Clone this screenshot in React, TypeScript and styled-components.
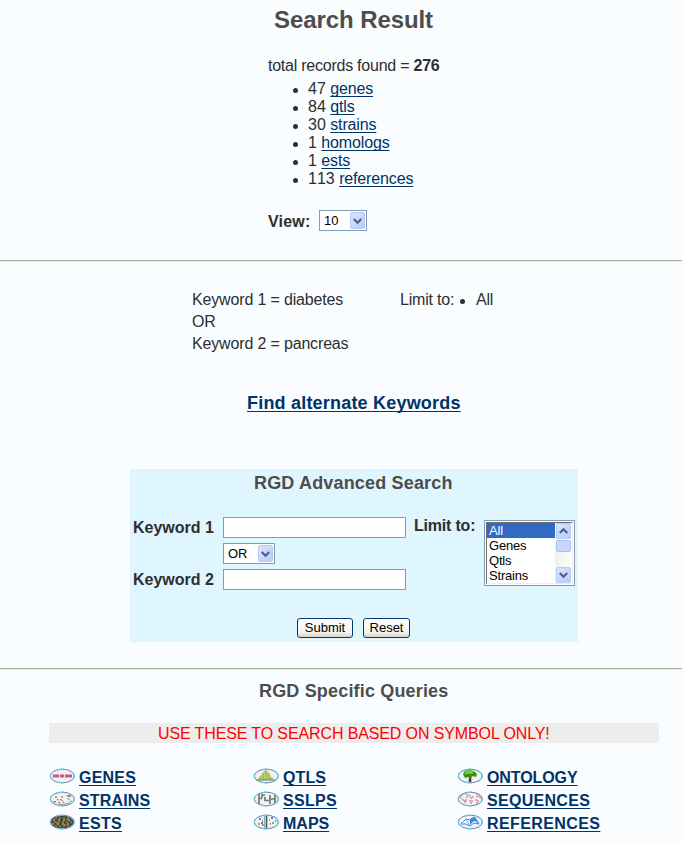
import React from "react";
import styled, { createGlobalStyle } from "styled-components";

const GlobalStyle = createGlobalStyle`
  body {
    margin: 0;
    background: #fafdff;
    color: #2e2e2e;
    font: 16px/18px "Liberation Sans", Arial, sans-serif;
  }
`;

const Page = styled.main`
  width: 682px;
  height: 842px;
  overflow: hidden;
`;

const Anchor = styled.a<{ $spacing?: number }>`
  color: #003366;
  text-decoration: underline;
  text-decoration-thickness: 1px;
  text-underline-offset: 2px;
  text-decoration-skip-ink: none;
  letter-spacing: ${(p) => p.$spacing ?? 0}px;
`;

const Results = styled.section`
  height: 254px;
  padding: 6px 0 0 268px;
  display: flex;
  flex-direction: column;
  align-items: flex-start;
`;

const PageTitle = styled.h1`
  margin: 0 0 23px 6px;
  font-size: 24px;
  line-height: 28px;
  letter-spacing: -0.08px;
  color: #4d4d4d;
`;

const Total = styled.p`
  margin: 0;
  height: 23px;
  white-space: pre;
  letter-spacing: -0.24px;
`;

const ResultList = styled.ul`
  margin: 0;
  padding: 0;
  list-style: none;
  font-kerning: none;
`;

const ResultItem = styled.li`
  display: flex;
  align-items: center;
  height: 18px;
  padding-left: 25px;
  white-space: pre;
`;

const Bullet = styled.span<{ $gap: number }>`
  width: 5px;
  height: 5px;
  margin: 3px ${(p) => p.$gap}px 0 0;
  border-radius: 50%;
  background: #2e2e2e;
`;

const ViewRow = styled.div`
  display: flex;
  align-items: center;
  margin-top: 22px;
  height: 21px;
`;

const Label = styled.label`
  font-weight: bold;
`;

const ViewLabel = styled(Label)`
  width: 51px;
  padding-top: 2px;
  letter-spacing: 0.2px;
`;

const LimitLabel = styled(Label)`
  letter-spacing: -0.2px;
`;

const Divider = styled.hr`
  margin: 0;
  height: 1px;
  border: 0;
  border-top: 1px solid #aca899;
  background: #f1eee0;
`;

const SelectBox = styled.div<{ $width: number }>`
  box-sizing: border-box;
  width: ${(p) => p.$width}px;
  height: 21px;
  padding: 1px 1px 1px 4px;
  border: 1px solid #7f9db9;
  background: #fff;
  display: flex;
  align-items: center;
  justify-content: space-between;
  color: #000;
  font-size: 13px;
  line-height: 17px;
`;

const ArrowButton = styled.span<{ $height: number }>`
  box-sizing: border-box;
  width: 15px;
  height: ${(p) => p.$height}px;
  border: 1px solid #b6caf7;
  border-radius: 2px;
  background: linear-gradient(135deg, #d9e5ff, #b7cbfa);
  display: flex;
  align-items: center;
  justify-content: center;
`;

const Chevron = ({ up = false }: { up?: boolean }) => (
  <svg width="9" height="6" viewBox="0 0 9 6">
    <path
      d={up ? "M.8 5 4.5 1.3 8.2 5" : "M.8 1 4.5 4.7 8.2 1"}
      fill="none"
      stroke="#4d6185"
      strokeWidth="2.2"
    />
  </svg>
);

const Select = ({ value, width }: { value: string; width: number }) => (
  <SelectBox $width={width}>
    {value}
    <ArrowButton $height={17}>
      <Chevron />
    </ArrowButton>
  </SelectBox>
);

const Criteria = styled.section`
  display: grid;
  grid-template-columns: 208px auto;
  height: 131px;
  padding: 27px 0 0 192px;
  box-sizing: border-box;
  line-height: 22px;
  align-items: start;
`;

const Terms = styled.div`
  white-space: pre-line;
  letter-spacing: -0.16px;
`;

const Limit = styled.div`
  display: flex;
  align-items: center;
  letter-spacing: -0.2px;
`;

const LimitText = styled.span`
  width: 60px;
`;

const Alternate = styled.div`
  height: 76px;
  padding-left: 247px;
  font-size: 18px;
  font-weight: bold;
  line-height: 20px;
`;

const Panel = styled.form`
  box-sizing: border-box;
  width: 448px;
  height: 173px;
  margin: 0 0 26px 130px;
  padding: 4px 3px 0;
  background: #dff6ff;
`;

const Heading = styled.h2<{ $left: number }>`
  margin: 0;
  padding-left: ${(p) => p.$left}px;
  font-size: 18px;
  line-height: 21px;
  letter-spacing: 0.17px;
  color: #4d4d4d;
`;

const Fields = styled.div`
  display: grid;
  grid-template-columns: 90px 191px 70px 91px;
  height: 100px;
  padding-top: 23px;
  box-sizing: border-box;
  align-items: start;
`;

const Stack = styled.div`
  display: flex;
  flex-direction: column;
  gap: 5px;
`;

const Keywords = styled.div`
  display: flex;
  flex-direction: column;
  gap: 34px;
  padding-top: 2px;
`;

const TextInput = styled.input`
  box-sizing: border-box;
  width: 183px;
  height: 21px;
  margin: 0;
  padding: 2px;
  border: 1px solid #7f9db9;
  background: #fff;
`;

const ListBox = styled.div`
  box-sizing: border-box;
  width: 91px;
  height: 66px;
  margin-top: 3px;
  border: 1px solid #7f9db9;
  padding: 1px;
  background: #fff;
  display: flex;
`;

const ListInner = styled.div`
  flex: 1;
  display: flex;
  border: 1px solid #716f64;
  border-right-color: #f1efe2;
  border-bottom-color: #f1efe2;
`;

const Options = styled.div`
  flex: 1;
`;

const Option = styled.div<{ $selected: boolean }>`
  height: 15px;
  padding-left: 2px;
  font-size: 13px;
  line-height: 15px;
  letter-spacing: -0.2px;
  color: ${(p) => (p.$selected ? "#fff" : "#000")};
  background: ${(p) => (p.$selected ? "#316ac5" : "transparent")};
`;

const Scrollbar = styled.div`
  width: 17px;
  display: flex;
  flex-direction: column;
  align-items: center;
  background: linear-gradient(90deg, #f0f0ec, #fefefb);
`;

const Thumb = styled.div`
  box-sizing: border-box;
  width: 15px;
  height: 12px;
  margin: 1px 0 auto;
  border: 1px solid #a9bff0;
  border-radius: 2px;
  background: #c6d6fc;
`;

const Buttons = styled.div`
  display: flex;
  gap: 10px;
  padding-left: 164px;
  padding-top: 24px;
`;

const Button = styled.button<{ $width: number }>`
  width: ${(p) => p.$width}px;
  height: 20px;
  padding: 0;
  border: 1px solid #003c74;
  border-radius: 3px;
  background: linear-gradient(#fff, #f3f2ed 75%, #d8d3c7);
  color: #000;
  font: 13px/18px "Liberation Sans", Arial, sans-serif;
`;

const Queries = styled.section`
  padding-top: 11px;
`;

const Notice = styled.p`
  margin: 21px 0 23px 49px;
  width: 610px;
  height: 20px;
  text-indent: 109px;
  line-height: 21px;
  background: #ededed;
  color: #f00;
  white-space: nowrap;
  letter-spacing: -0.12px;
`;

const QueryGrid = styled.nav`
  display: grid;
  grid-template-columns: repeat(3, 204px);
  grid-auto-rows: 23px;
  padding-left: 49px;
`;

const QueryItem = styled.div`
  display: flex;
  align-items: center;
  gap: 4px;
  font-weight: bold;
  white-space: nowrap;
`;

const Badge = styled.svg`
  width: 26px;
  height: 16px;
  margin-top: -3px;
`;

const art: Record<string, React.ReactNode> = {
  GENES: (
    <>
      <path d="M3 8H23" stroke="#f0b5cd" />
      <path d="M4 6.5h6v3H4zM11 6.5h4v3h-4zM16 6.5h7v3h-7z" fill="#dc4b91" />
    </>
  ),
  QTLS: (
    <>
      <path d="M4 12 8 7l2-3 3-2 3 3 2 4 3 3z" fill="#b9cd72" />
      <path d="M7 9v3M10 5v7M13 2v10M16 5v7M19 9v3" stroke="#8fa94b" strokeWidth=".7" />
      <path d="M3 12H23" stroke="#708252" />
    </>
  ),
  ONTOLOGY: (
    <>
      <path d="M12 8h2l.5 6h-3z" fill="#882a20" />
      <path d="M6 6 8 3l4-1 5 1 3 3-1 3-3-1-2 2-3-1-3 1z" fill="#339315" />
      <path d="M8 4 12 2.5l5 1L15 6l-4-.5L8 7z" fill="#7bd622" />
    </>
  ),
  STRAINS: (
    <>
      <path d="M7 13 6 6l3 1 3-1 2 1 5-2 4 3-1 3-5 2-6 1z" fill="#f2efed" />
      <path d="m9 13 4 .5 6-1 4-3M13 9l2 3M18 7l3 2" fill="none" stroke="#8b929c" />
      <path d="M6 5h2v2H6zM12 5h2v2h-2z" fill="#c9929d" />
      <path d="M8 8h1.2v1.2H8zM11 8h1.2v1.2H11zM9.5 11h1.5v1H9.5z" fill="#d62e45" />
      <path d="M17 4h5v2h-3zM4 10h3v1.5H4z" fill="#858ba0" />
    </>
  ),
  SSLPS: (
    <path
      d="M6 3v10M9 3v4M6 7.5h3M9 4h3M12 9.5h4M12 6v4M17 4v9M22 4v8M17 8h5"
      fill="none"
      stroke="#777"
      strokeWidth="1.7"
    />
  ),
  SEQUENCES: (
    <path
      d="M6 4H3v3h3M8 3h3v3H8M13 4v3h3V4M19 3h2v3h-2M5 9h3v2M10 9H8v3M13 9v3h2V9M18 9h3v3h-2M22 6h2v2"
      fill="none"
      stroke="#d9588c"
      strokeWidth="1"
      strokeDasharray="2 1"
    />
  ),
  ESTS: (
    <>
      <ellipse cx="13" cy="8" rx="12" ry="6.5" fill="#4c4940" />
      <path d="M4 6h18M3 10h20" stroke="#c07b38" strokeWidth="2" strokeDasharray="2 3" />
      <path d="M6 4h14M5 8h18M6 12h14" stroke="#5b9a50" strokeWidth="1.6" strokeDasharray="2 2" />
      <path d="M7 8h2v2H7zM15 10h2v2h-2zM17 5h2v1h-2z" fill="#dd5d31" />
    </>
  ),
  MAPS: (
    <>
      <path d="M11.5 2v12" stroke="#98a6a0" />
      <path d="M13.5 2v12" stroke="#176453" strokeWidth="1.5" />
      <path d="M6 5h2M8 9h2M18 4h2M22 7h1" stroke="#4e4cf0" strokeWidth="1.3" />
      <path d="M5 10h2M16 6h1M19 9h2" stroke="#31ba49" strokeWidth="1.3" />
      <path d="M9 7h1M9 11h2M17 10h1" stroke="#eb417b" strokeWidth="1.3" />
    </>
  ),
  REFERENCES: (
    <>
      <path d="m4 10 5-5 4 1 4-3 5 7-5-1-4 3-4-2z" fill="#fff" stroke="#3b82e8" />
      <path d="m13 5 5-2 4 6-5-2-4 4z" fill="#328bec" />
      <path d="m9 5 4 7" stroke="#78aaf5" />
    </>
  ),
};

const BadgeIcon = ({ name }: { name: string }) => (
  <Badge viewBox="0 0 26 16">
    <ellipse cx="13.3" cy="8" rx="12" ry="6.8" fill="#edf5ec" />
    {art[name]}
    <ellipse cx="13.3" cy="8" rx="12" ry="6.8" fill="none" stroke="#8377bd" />
    <ellipse
      cx="13.3"
      cy="8"
      rx="12"
      ry="6.8"
      fill="none"
      stroke="#65c5df"
      strokeWidth="1.2"
      strokeDasharray="7 6"
    />
  </Badge>
);

const results: [string, string][] = [
  ["47", "genes"],
  ["84", "qtls"],
  ["30", "strains"],
  ["1", "homologs"],
  ["1", "ests"],
  ["113", "references"],
];

const queries: { name: string; spacing: number }[] = [
  { name: "GENES", spacing: 0.2 },
  { name: "QTLS", spacing: 0.1 },
  { name: "ONTOLOGY", spacing: -0.1 },
  { name: "STRAINS", spacing: 0.15 },
  { name: "SSLPS", spacing: 0.3 },
  { name: "SEQUENCES", spacing: 0.3 },
  { name: "ESTS", spacing: 0.3 },
  { name: "MAPS", spacing: 0 },
  { name: "REFERENCES", spacing: 0.4 },
];

export default function App() {
  return (
    <Page>
      <GlobalStyle />
      <Results>
        <PageTitle>Search Result</PageTitle>
        <Total>
          total records found = <b>276</b>
        </Total>
        <ResultList>
          {results.map(([count, name]) => (
            <ResultItem key={name}>
              <Bullet $gap={10} />
              {count + " "}
              <Anchor $spacing={-0.15}>{name}</Anchor>
            </ResultItem>
          ))}
        </ResultList>
        <ViewRow>
          <ViewLabel>View:</ViewLabel>
          <Select value="10" width={48} />
        </ViewRow>
      </Results>
      <Divider />
      <Criteria>
        <Terms>{"Keyword 1 = diabetes\nOR\nKeyword 2 = pancreas"}</Terms>
        <Limit>
          <LimitText>Limit to:</LimitText>
          <Bullet $gap={11} />
          All
        </Limit>
      </Criteria>
      <Alternate>
        <Anchor $spacing={0.2}>Find alternate Keywords</Anchor>
      </Alternate>
      <Panel>
        <Heading $left={121}>RGD Advanced Search</Heading>
        <Fields>
          <Keywords>
            <Label>Keyword 1</Label>
            <Label>Keyword 2</Label>
          </Keywords>
          <Stack>
            <TextInput />
            <Select value="OR" width={52} />
            <TextInput />
          </Stack>
          <LimitLabel>Limit to:</LimitLabel>
          <ListBox>
            <ListInner>
              <Options>
                {["All", "Genes", "Qtls", "Strains"].map((name) => (
                  <Option key={name} $selected={name === "All"}>
                    {name}
                  </Option>
                ))}
              </Options>
              <Scrollbar>
                <ArrowButton $height={16}>
                  <Chevron up />
                </ArrowButton>
                <Thumb />
                <ArrowButton $height={16}>
                  <Chevron />
                </ArrowButton>
              </Scrollbar>
            </ListInner>
          </ListBox>
        </Fields>
        <Buttons>
          <Button type="button" $width={56}>Submit</Button>
          <Button type="button" $width={47}>Reset</Button>
        </Buttons>
      </Panel>
      <Divider />
      <Queries>
        <Heading $left={259}>RGD Specific Queries</Heading>
        <Notice>USE THESE TO SEARCH BASED ON SYMBOL ONLY!</Notice>
        <QueryGrid>
          {queries.map(({ name, spacing }) => (
            <QueryItem key={name}>
              <BadgeIcon name={name} />
              <Anchor $spacing={spacing}>{name}</Anchor>
            </QueryItem>
          ))}
        </QueryGrid>
      </Queries>
    </Page>
  );
}
